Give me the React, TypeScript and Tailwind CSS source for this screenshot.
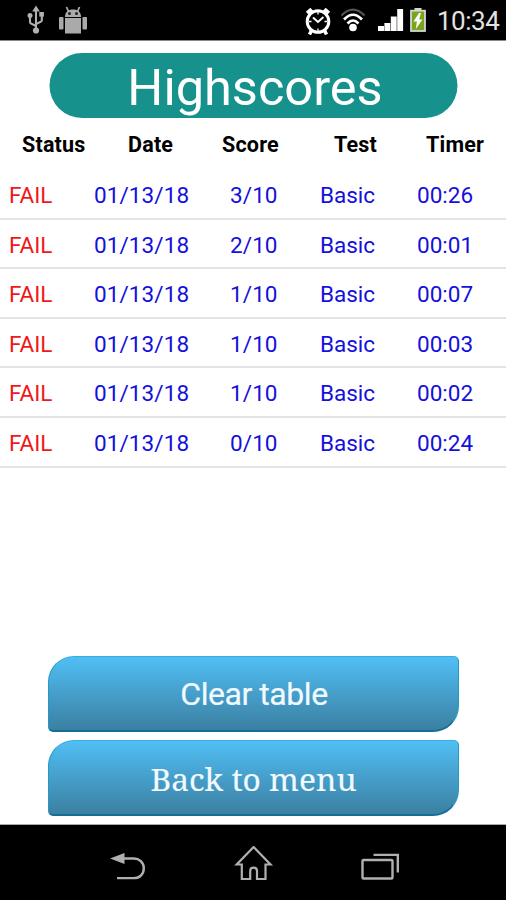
import clsx from "clsx";

const columns = ["Status", "Date", "Score", "Test", "Timer"];

const scores = [
  { status: "FAIL", date: "01/13/18", score: "3/10", test: "Basic", timer: "00:26" },
  { status: "FAIL", date: "01/13/18", score: "2/10", test: "Basic", timer: "00:01" },
  { status: "FAIL", date: "01/13/18", score: "1/10", test: "Basic", timer: "00:07" },
  { status: "FAIL", date: "01/13/18", score: "1/10", test: "Basic", timer: "00:03" },
  { status: "FAIL", date: "01/13/18", score: "1/10", test: "Basic", timer: "00:02" },
  { status: "FAIL", date: "01/13/18", score: "0/10", test: "Basic", timer: "00:24" },
];

function UsbIcon() {
  return (
    <svg width="18" height="30" viewBox="0 0 18 30" fill="none" stroke="#b0b0b0" strokeWidth="2.1">
      <path d="M9 4v20M9 21l-5.200-2.600c-.6-.4-.8-.8-.8-1.500V11M9 19l5-2.300c.6-.4.8-.8.8-1.500V9" />
      <path d="M9 .5l3.800 6h-7.600z" fill="#b0b0b0" stroke="none" />
      <circle cx="9" cy="25.500" r="3.100" fill="#b0b0b0" stroke="none" />
      <circle cx="3" cy="10.500" r="2.500" fill="#b0b0b0" stroke="none" />
      <path d="M12.300 7h4.600v4.600h-4.600z" fill="#b0b0b0" stroke="none" />
    </svg>
  );
}

function AndroidIcon() {
  return (
    <svg width="30" height="28" viewBox="0 0 30 28" fill="#aaa">
      <path d="M7 11C7 6 10 3.500 15 3.500s8 2.500 8 7.500z" />
      <path d="M10.500 5.500 8.500 1M19.500 5.500 21.500 1" stroke="#aaa" strokeWidth="1.800" />
      <path d="M7 12h16v15.500H7z" />
      <rect x="1" y="11" width="4.500" height="12.500" rx="1" />
      <rect x="24.500" y="11" width="4.500" height="12.500" rx="1" />
      <circle cx="11.500" cy="7.500" r="1.500" fill="#222" />
      <circle cx="18.500" cy="7.500" r="1.500" fill="#222" />
    </svg>
  );
}

function AlarmIcon() {
  return (
    <svg width="26" height="28" viewBox="0 0 26 28" fill="none" stroke="#fff">
      <circle cx="13" cy="14.500" r="10.800" strokeWidth="3" />
      <path d="M2.500 6.500 7 2.500M23.500 6.500l-4.500-4" strokeWidth="5" />
      <path d="M6.500 23.500l-2 4M19.500 23.500l2 4" strokeWidth="3.500" />
      <path d="M8 10.500 13 15l5.500-5" strokeWidth="1.900" />
      <path d="M13 5v2.500M13 21.500V24M4 14.500h2.500M19.500 14.500H22" strokeWidth="1.300" />
    </svg>
  );
}

function WifiIcon() {
  return (
    <svg width="26" height="24" viewBox="0 0 26 24" fill="none" stroke="#fff">
      <path d="M1.500 7.500Q13-4 24.500 7.500" stroke="#555" strokeWidth="2.200" />
      <path d="M4 11.500Q13 2 22 11.500" strokeWidth="2.700" />
      <path d="M7.500 15.500Q13 9.500 18.500 15.500" strokeWidth="2.600" />
      <circle cx="13" cy="19.500" r="3.800" fill="#fff" stroke="none" />
    </svg>
  );
}

function SignalIcon() {
  return (
    <svg width="26" height="24" viewBox="0 0 26 24" fill="#fff">
      <path d="M0 18h6v5H0zM6.400 15h5.900v8H6.400zM12.800 8.500h5.900V23h-5.900zM19.200 1h5.900v22h-5.900z" />
    </svg>
  );
}

function BatteryIcon() {
  return (
    <svg width="16" height="24" viewBox="0 0 16 24">
      <path d="M4.500 0h7v3h-7z" fill="#d5d5d5" />
      <rect x="1" y="2.700" width="14" height="20.300" fill="#78a51a" stroke="#d5d5d5" strokeWidth="1.800" />
      <path d="M9 5 3.500 13.500h3.400L5.800 21 12.500 11.500H9.200L11 5z" fill="#fff" />
    </svg>
  );
}

function StatusBar() {
  return (
    <header className="flex h-10 shrink-0 items-center bg-black shadow-[0_1px_0_#8a8a8a]">
      <div className="flex flex-1 items-center gap-[13px] pl-[27px]">
        <UsbIcon />
        <AndroidIcon />
      </div>
      <div className="flex items-center pt-0.5 pr-[6px]">
        <AlarmIcon />
        <div className="flex items-center pb-0.5 pl-[9px]">
          <WifiIcon />
          <div className="w-[12px]" />
          <SignalIcon />
          <div className="w-[6px]" />
          <BatteryIcon />
        </div>
        <span className="ml-[11px] w-[63px] text-[26px] leading-none tracking-[-0.500px] whitespace-nowrap text-[#e2e2e2]">
          10:34
        </span>
      </div>
    </header>
  );
}

function ScoreTable() {
  return (
    <section>
      <div className="grid h-[52px] grid-cols-[106px_94px_112px_92px_102px] items-center pt-[3px] text-[21.500px] font-bold tracking-[0.200px] text-black">
        {columns.map((column) => (
          <span key={column} className="pl-[22px] whitespace-nowrap">
            {column}
          </span>
        ))}
      </div>
      {scores.map((row, i) => (
        <div
          key={i}
          className="grid h-[49.600px] grid-cols-[85px_136px_90px_97px_98px] items-center border-b-2 border-[#e4e4e4] pt-[4px] pl-[9px] text-[22.500px] text-[#1410dc]"
        >
          <span className="text-[#f01818]">{row.status}</span>
          <span className="tracking-[0.100px]">{row.date}</span>
          <span className="tracking-[0.100px]">{row.score}</span>
          <span>{row.test}</span>
          <span>{row.timer}</span>
        </div>
      ))}
    </section>
  );
}

function MenuButton({ label, serif }: { label: string; serif?: boolean }) {
  return (
    <button
      className={clsx(
        "flex h-[76px] w-[411px] items-center justify-center rounded-tl-[26px] rounded-tr-[5px] rounded-br-[26px] rounded-bl-[5px] border border-t-[#38aee0] border-r-[#2499c4] border-b-2 border-b-[#146f98] border-l-[#2499c4] bg-linear-to-b from-[#50bff5] to-[#3b80a2] text-[#f1faff]",
        serif
          ? "pt-[2px] pl-px font-['Noto_Serif','DejaVu_Serif_Condensed','DejaVu_Serif',serif] text-[31.700px] [-webkit-text-stroke:0.150px_#f1faff]"
          : "pt-px pl-[2px] text-[32px] tracking-[-0.450px] [-webkit-text-stroke:0.200px_#f1faff]"
      )}
    >
      {label}
    </button>
  );
}

function NavigationBar() {
  return (
    <nav className="flex h-[75px] shrink-0 items-center bg-black pl-[109px] pt-[4px] shadow-[0_-1px_0_#aaa]">
      <svg width="38" height="38" viewBox="0 0 38 38" fill="none" stroke="#b0b0b0" strokeWidth="2.400">
        <path d="M12 12.500h13c5 0 9.800 4 9.800 9.700s-4 9.900-9.800 9.900H8" />
        <path d="M1 12.500 15.500 7v11z" fill="#b0b0b0" stroke="none" />
      </svg>
      <svg className="ml-[87px]" width="40" height="38" viewBox="0 0 40 38" fill="none" stroke="#b0b0b0" strokeWidth="2.200">
        <path d="M19.600 1 36.500 18.500H31.500V33h-8.500V25c0-4.500-6.800-4.500-6.800 0v8H7.800V18.500H2.700z" />
      </svg>
      <svg className="ml-[86px]" width="40" height="38" viewBox="0 0 40 38" fill="none" stroke="#b0b0b0" strokeWidth="2.400">
        <rect x="2.500" y="14" width="30" height="18.500" rx="1" />
        <path d="M13.500 8.900h24.300v17.500" />
      </svg>
    </nav>
  );
}

export default function App() {
  return (
    <div className="flex h-[900px] w-[506px] flex-col overflow-hidden bg-white font-[Roboto,sans-serif]">
      <StatusBar />
      <main className="flex flex-1 flex-col">
        <h1 className="mx-auto mt-[13px] flex h-[65px] w-[408px] translate-x-[0.500px] items-center justify-center rounded-full bg-[#16918c] pt-[5px] pl-[3px] text-[50.500px] leading-none text-white">
          Highscores
        </h1>
        <ScoreTable />
        <div className="mt-auto mb-[9px] flex flex-col items-center gap-2">
          <MenuButton label="Clear table" />
          <MenuButton label="Back to menu" serif />
        </div>
      </main>
      <NavigationBar />
    </div>
  );
}
